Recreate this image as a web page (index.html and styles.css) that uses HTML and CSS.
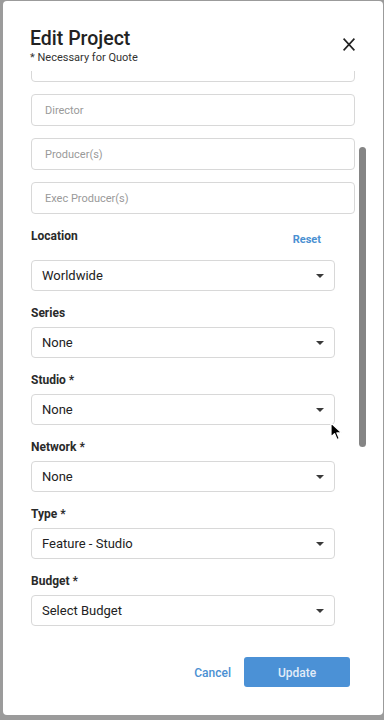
FILE: index.html
```html
<!DOCTYPE html>
<html lang="en">
<head>
    <meta charset="UTF-8">
    <meta name="viewport" content="width=device-width, initial-scale=1">
    <title>Edit Project</title>
    <link rel="stylesheet" href="styles.css">
</head>
<body>

    <div class="modal">

        <header class="modal-head">
            <div>
                <h1>Edit Project</h1>
                <p class="note">* Necessary for Quote</p>
            </div>
            <button class="close" aria-label="Close">
                <svg width="12" height="13" viewBox="0 0 12 13">
                    <path d="M0.6 0.6 L11.4 12.4 M11.4 0.6 L0.6 12.4" stroke="#222" stroke-width="1.6" fill="none"/>
                </svg>
            </button>
        </header>

        <section class="modal-body">
            <div class="form">
                <input class="field first" type="text">
                <input class="field" type="text" placeholder="Director">
                <input class="field" type="text" placeholder="Producer(s)">
                <input class="field" type="text" placeholder="Exec Producer(s)">

                <div class="label-row">
                    <label>Location</label>
                    <a class="reset" href="#">Reset</a>
                </div>
                <div class="select">Worldwide<span class="caret"></span></div>

                <label>Series</label>
                <div class="select">None<span class="caret"></span></div>

                <label>Studio *</label>
                <div class="select">None<span class="caret"></span></div>

                <label>Network *</label>
                <div class="select">None<span class="caret"></span></div>

                <label>Type *</label>
                <div class="select">Feature - Studio<span class="caret"></span></div>

                <label>Budget *</label>
                <div class="select">Select Budget<span class="caret"></span></div>

                <label class="faded">Shoot Dates</label>
            </div>
            <div class="scrollbar"></div>
        </section>

        <footer class="modal-foot">
            <button class="cancel">Cancel</button>
            <button class="update">Update</button>
        </footer>

    </div>

    <svg class="cursor" width="13" height="19" viewBox="0 0 13 19">
        <path d="M1 1 L1 15 L4.5 11.6 L7 17.5 L9.3 16.5 L6.9 10.9 L11.6 10.9 Z" fill="#000" stroke="#fff" stroke-width="1.2" stroke-linejoin="round"/>
    </svg>

</body>
</html>
```

FILE: styles.css
```css
html, body {
    margin: 0;
    padding: 0;
}

body {
    background-color: #9b9b9b;
    height: 720px;
    overflow: hidden;
    font-family: Roboto, "Liberation Sans", sans-serif;
    color: #222;
}

.modal {
    margin: 1px 1px 0 3px;
    height: 714px;
    background: #fff;
    border-radius: 4px;
    display: flex;
    flex-direction: column;
}

.modal-head {
    height: 70px;
    box-sizing: border-box;
    padding: 26px 28px 0 27px;
    display: flex;
    justify-content: space-between;
    align-items: flex-start;
}

h1 {
    margin: 0;
    font-size: 19.5px;
    line-height: 24px;
    font-weight: 500;
    color: #222;
}

.note {
    margin: 0;
    font-size: 11px;
    line-height: 13px;
    color: #333;
}

.close {
    margin-top: 11px;
    padding: 0;
    border: 0;
    background: none;
    line-height: 0;
}

.modal-body {
    position: relative;
    height: 570px;
    overflow: hidden;
}

.form {
    padding-left: 28px;
    margin-top: -21px;
}

.field {
    display: block;
    box-sizing: border-box;
    width: 324px;
    height: 32px;
    margin: 0 0 12px 0;
    padding: 0 13px;
    border: 1px solid #d8d8d8;
    border-radius: 4px;
    font-family: Roboto, sans-serif;
    font-size: 11px;
    color: #222;
    outline: none;
}

.field::placeholder {
    color: #9a9a9a;
}

label {
    display: block;
    font-size: 12px;
    line-height: 20px;
    font-weight: 700;
    color: #2a2a2a;
    margin-bottom: 4px;
}

.faded {
    color: #e4e4e4;
}

.label-row {
    width: 304px;
    display: flex;
    justify-content: space-between;
    align-items: flex-start;
    height: 20px;
    margin-bottom: 14px;
}

.label-row label {
    margin: 0;
}

.reset {
    margin: 4px 14px 0 0;
    font-size: 11px;
    line-height: 20px;
    font-weight: 700;
    color: #4a90d2;
    text-decoration: none;
}

.select {
    box-sizing: border-box;
    width: 304px;
    height: 31px;
    margin-bottom: 12px;
    padding: 0 10px 0 10px;
    border: 1px solid #d8d8d8;
    border-radius: 4px;
    display: flex;
    align-items: center;
    justify-content: space-between;
    font-size: 13px;
    color: #222;
}

.caret {
    width: 0;
    height: 0;
    border-left: 4px solid transparent;
    border-right: 4px solid transparent;
    border-top: 4px solid #3a3a3a;
}

.scrollbar {
    position: absolute;
    left: 356px;
    top: 76px;
    width: 7px;
    height: 300px;
    border-radius: 4px;
    background: #858585;
}

.modal-foot {
    flex: 1;
    padding: 16px 33px 0 0;
    display: flex;
    justify-content: flex-end;
    align-items: flex-start;
}

.cancel {
    margin-right: 13px;
    height: 30px;
    padding: 2px 0 0 0;
    border: 0;
    background: none;
    font-family: Roboto, sans-serif;
    font-size: 12px;
    font-weight: 500;
    color: #4a90d2;
}

.update {
    width: 106px;
    height: 30px;
    padding: 2px 0 0 0;
    border: 0;
    border-radius: 3px;
    background: #4b91d6;
    font-family: Roboto, sans-serif;
    font-size: 12px;
    font-weight: 500;
    color: #e2ecf8;
}

.cursor {
    position: absolute;
    left: 330px;
    top: 422px;
}
```
